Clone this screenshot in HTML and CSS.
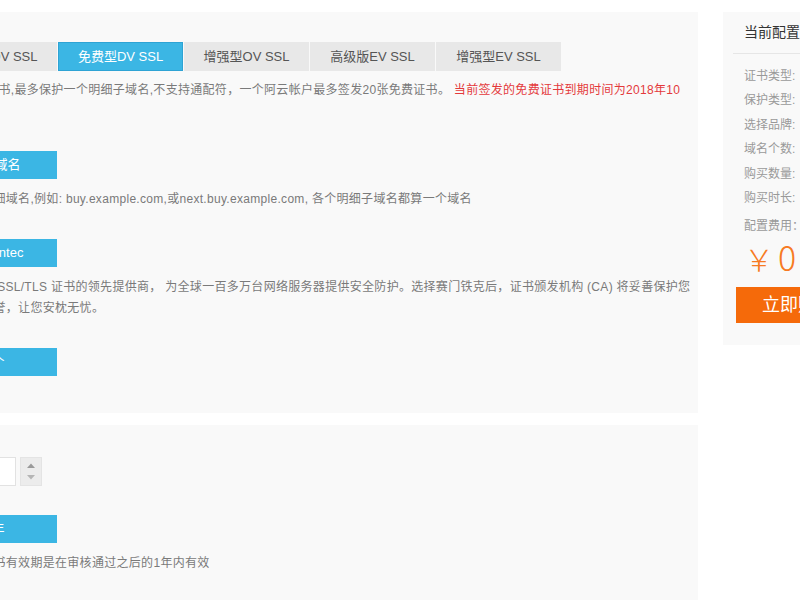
FILE: index.html
```html
<!DOCTYPE html>
<html lang="zh-CN">
<head>
<meta charset="utf-8">
<title>SSL证书购买</title>
<link rel="stylesheet" href="styles.css">
</head>
<body>
<div class="page">
  <div class="main">
    <section class="panel panel-top">
      <div class="tabs">
        <div class="tab">专业版OV SSL</div>
        <div class="tab active">免费型DV SSL</div>
        <div class="tab">增强型OV SSL</div>
        <div class="tab">高级版EV SSL</div>
        <div class="tab">增强型EV SSL</div>
      </div>
      <p class="desc first">免费型DV证书,最多保护一个明细子域名,不支持通配符，一个阿云帐户最多签发20张免费证书。 <span class="red">当前签发的免费证书到期时间为2018年10</span><br><span class="red">月12日</span></p>

      <div class="row">
        <div class="btn">单个域名</div>
        <p class="desc">保护一个明细域名,例如: buy.example.com,或next.buy.example.com, 各个明细子域名都算一个域名</p>
      </div>

      <div class="row">
        <div class="btn">Symantec</div>
        <p class="desc">赛门铁克是 SSL/TLS 证书的领先提供商， 为全球一百多万台网络服务器提供安全防护。选择赛门铁克后，证书颁发机构 (CA) 将妥善保护您<br>的网站和声誉，让您安枕无忧。</p>
      </div>

      <div class="row">
        <div class="btn">1个</div>
      </div>
    </section>

    <section class="panel panel-bottom">
      <div class="number">
        <div class="num-input">1</div>
        <div class="spinner">
          <svg width="22" height="29" viewBox="0 0 22 29">
            <path d="M7 11 L11 6.5 L15 11 Z" fill="#9a9a9a"/>
            <path d="M7 18 L15 18 L11 22.5 Z" fill="#b5b5b5"/>
          </svg>
        </div>
      </div>
      <div class="row">
        <div class="btn">1年</div>
        <p class="desc">提示：该证书有效期是在审核通过之后的1年内有效</p>
      </div>
    </section>
  </div>

  <aside class="side">
    <div class="side-head">当前配置</div>
    <ul class="conf">
      <li>证书类型:</li>
      <li>保护类型:</li>
      <li>选择品牌:</li>
      <li>域名个数:</li>
      <li>购买数量:</li>
      <li>购买时长:</li>
      <li class="fee">配置费用：</li>
    </ul>
    <div class="price"><span class="yen">￥</span>0</div>
    <div class="buy">立即购买</div>
  </aside>
</div>
</body>
</html>
```

FILE: styles.css
```css
html, body {
  margin: 0;
  padding: 0;
  background: #ffffff;
  overflow: hidden;
  height: 100%;
}

body {
  font-family: "Liberation Sans", "Noto Sans CJK SC", sans-serif;
  font-size: 12px;
  color: #777;
}

.page {
  display: flex;
  align-items: flex-start;
  gap: 25px;
  padding-top: 12px;
  margin-left: -100px;
}

.main {
  width: 798px;
  flex-shrink: 0;
  display: flex;
  flex-direction: column;
  gap: 12px;
}

.panel {
  background: #f9f9f9;
  padding: 30px 10px 37px 32px;
}

.panel-bottom {
  padding-top: 32px;
  min-height: 300px;
}

.tabs {
  display: flex;
  gap: 1px;
}

.tab {
  width: 125px;
  height: 29px;
  line-height: 29px;
  box-sizing: border-box;
  text-align: center;
  background: #e8e8e8;
  color: #555;
  font-size: 13px;
}

.tab.active {
  background: #3bb6e4;
  border: 1px solid #2ea3d4;
  line-height: 27px;
  color: #fff;
}

.desc {
  margin: 10px 0 0;
  line-height: 21px;
  white-space: nowrap;
  color: #7a7a7a;
  letter-spacing: 0.3px;
}

.desc.first {
  margin-top: 9px;
}

.red {
  color: #e4393c;
}

.row {
  margin-top: 29px;
}

.btn {
  width: 125px;
  height: 28px;
  line-height: 28px;
  text-align: center;
  background: #3bb6e4;
  color: #fff;
  font-size: 13px;
}

.number {
  display: flex;
  gap: 4px;
  height: 29px;
}

.num-input {
  width: 82px;
  height: 27px;
  background: #fff;
  border: 1px solid #e2e2e2;
  line-height: 27px;
  color: #fff;
}

.spinner {
  width: 22px;
  height: 29px;
  box-sizing: border-box;
  background: #ececec;
  border: 1px solid #e4e4e4;
}

.spinner svg {
  display: block;
  margin: -1px;
}

.side {
  width: 150px;
  flex-shrink: 0;
  background: #f9f9f9;
  padding-bottom: 22px;
}

.side-head {
  margin: 0 10px;
  padding-left: 11px;
  height: 41px;
  line-height: 41px;
  font-size: 14px;
  color: #333;
  border-bottom: 1px solid #e6e6e6;
}

.conf {
  list-style: none;
  margin: 0;
  padding: 10px 0 0 21px;
}

.conf li {
  line-height: 24.4px;
  color: #999;
  white-space: nowrap;
}

.conf li.fee {
  margin-top: 4px;
  line-height: 24px;
}

.price {
  margin: 2px 0 0 21px;
  height: 34px;
  line-height: 34px;
  font-size: 34px;
  color: #f77a22;
  font-family: "Noto Sans CJK SC", sans-serif;
  font-weight: 300;
  white-space: nowrap;
}

.yen {
  font-size: 30px;
  margin-right: 4px;
}

.buy {
  margin: 13px 13px 0;
  height: 36px;
  line-height: 36px;
  text-align: center;
  background: #f56a0a;
  color: #fff;
  font-size: 18px;
}
```
